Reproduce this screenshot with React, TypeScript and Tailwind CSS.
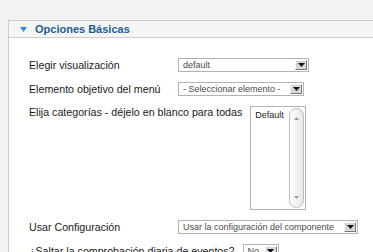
import React from "react";

function Arrow() {
  return (
    <div className="absolute right-[1px] top-[1px] bottom-[1px] w-[12px] bg-[#d6d6d6] border-t border-l border-t-[#f4f4f4] border-l-[#f4f4f4] border-r border-b border-r-[#7a7a7a] border-b-[#7a7a7a] flex items-center justify-center">
      <svg width="7" height="4" viewBox="0 0 7 4">
        <polygon points="0,0 7,0 3.5,4" fill="#111" />
      </svg>
    </div>
  );
}

function Select({ text, w }: { text: string; w: number }) {
  return (
    <div
      className="relative h-[14px] shrink-0 border border-[#b3b3b3] bg-white flex items-center pl-[4px] text-[9px] leading-none text-[#4a4a4a]"
      style={{ width: w }}
    >
      <span className="whitespace-nowrap">{text}</span>
      <Arrow />
    </div>
  );
}

function Row({ label, children, start }: { label: string; children: React.ReactNode; start?: boolean }) {
  return (
    <div className={`flex gap-[8px] ${start ? "items-start" : "items-center"}`}>
      <div className="min-w-[141px] text-[10.67px] leading-[13px] text-[#1a1a1a] whitespace-nowrap">{label}</div>
      {children}
    </div>
  );
}

export default function App() {
  return (
    <div
      className="w-[373px] h-[252px] overflow-hidden bg-[#f2f2f2] pt-[20px] pl-[8px]"
      style={{ fontFamily: '"Liberation Sans", Arial, sans-serif' }}
    >
      <div className="w-[420px] border border-[#cccccc] bg-white">
        <div className="h-[17px] bg-[#f5f5f5] border-b border-[#cccccc] flex items-center pl-[11px] gap-[8px]">
          <svg width="7" height="5" viewBox="0 0 7 5">
            <polygon points="0,0 7,0 3.5,5" fill="#3b8ad0" />
          </svg>
          <span className="text-[11px] font-bold text-[#1a5d98] leading-none">Opciones Básicas</span>
        </div>
        <div className="pt-[20px] pl-[20px] pb-[20px] flex flex-col gap-[10px]">
          <Row label="Elegir visualización">
            <Select text="default" w={131} />
          </Row>
          <Row label="Elemento objetivo del menú">
            <Select text="- Seleccionar elemento -" w={126} />
          </Row>
          <Row label="Elija categorías - déjelo en blanco para todas" start>
            <div className="relative w-[56px] h-[104px] shrink-0 border border-[#b3b3b3] bg-white">
              <div className="pl-[4px] pt-[3px] text-[9px] leading-[11px] text-[#222]">Default</div>
              <div className="absolute right-[1px] top-[1px] bottom-[1px] w-[15px] rounded-full border border-[#bdbdbd] bg-gradient-to-r from-[#ffffff] to-[#e6e6e6] flex flex-col items-center justify-between py-[8px]">
                <svg width="5" height="3" viewBox="0 0 5 3">
                  <polygon points="0,3 5,3 2.5,0" fill="#999" />
                </svg>
                <svg width="5" height="3" viewBox="0 0 5 3">
                  <polygon points="0,0 5,0 2.5,3" fill="#999" />
                </svg>
              </div>
            </div>
          </Row>
          <Row label="Usar Configuración">
            <Select text="Usar la configuración del componente" w={180} />
          </Row>
          <Row label="¿Saltar la comprobación diaria de eventos?">
            <Select text="No" w={36} />
          </Row>
        </div>
      </div>
    </div>
  );
}
